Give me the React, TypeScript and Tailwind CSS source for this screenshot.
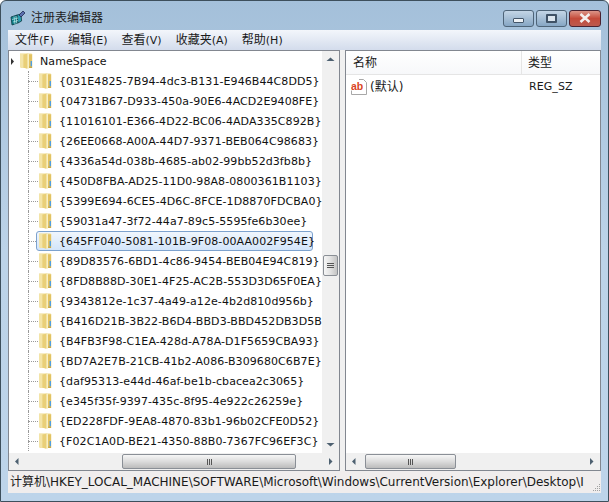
const FONT = '"DejaVu Sans","Noto Sans CJK SC",sans-serif';

const KEYS = [
  "{031E4825-7B94-4dc3-B131-E946B44C8DD5}",
  "{04731B67-D933-450a-90E6-4ACD2E9408FE}",
  "{11016101-E366-4D22-BC06-4ADA335C892B}",
  "{26EE0668-A00A-44D7-9371-BEB064C98683}",
  "{4336a54d-038b-4685-ab02-99bb52d3fb8b}",
  "{450D8FBA-AD25-11D0-98A8-0800361B1103}",
  "{5399E694-6CE5-4D6C-8FCE-1D8870FDCBA0}",
  "{59031a47-3f72-44a7-89c5-5595fe6b30ee}",
  "{645FF040-5081-101B-9F08-00AA002F954E}",
  "{89D83576-6BD1-4c86-9454-BEB04E94C819}",
  "{8FD8B88D-30E1-4F25-AC2B-553D3D65F0EA}",
  "{9343812e-1c37-4a49-a12e-4b2d810d956b}",
  "{B416D21B-3B22-B6D4-BBD3-BBD452DB3D5B}",
  "{B4FB3F98-C1EA-428d-A78A-D1F5659CBA93}",
  "{BD7A2E7B-21CB-41b2-A086-B309680C6B7E}",
  "{daf95313-e44d-46af-be1b-cbacea2c3065}",
  "{e345f35f-9397-435c-8f95-4e922c26259e}",
  "{ED228FDF-9EA8-4870-83b1-96b02CFE0D52}",
  "{F02C1A0D-BE21-4350-88B0-7367FC96EF3C}",
];

function Folder() {
  return (
    <svg width="16" height="18" viewBox="0 0 16 18" className="shrink-0 relative">
      <path d="M1 1.5h11.5l.8 1v13.5H2.5L1 15z" fill="#eed98c" />
      <path d="M1 2h3.5v14H2.5L1 15z" fill="#f3e4a8" />
      <path d="M4.5 3L8.5 1.5V17l-4-1.5z" fill="#e9cf78" />
      <path d="M8.5 2h1.5v14.5l-1.5.5z" fill="#f8efc4" />
      <path d="M10 2.5h3v13.5h-3z" fill="#e2c262" />
      <path d="M11.6 9h1.4v5.5h-1.4z" fill="#4f9ee0" />
      <path d="M10.2 14.5h2.8v1.5h-2.8z" fill="#c9a94a" />
    </svg>
  );
}

function Arrow({ dir }: { dir: "l" | "r" | "u" | "d" }) {
  const p = { l: "M5.5 1v7L2 4.5z", r: "M3 1v7l3.5-3.5z", u: "M4.5 2.5l4 3.5h-8z", d: "M.5 3h8l-4 3.5z" }[dir];
  return (
    <svg width="9" height="9" viewBox="0 0 9 9">
      <path d={p} fill="#4d6070" />
    </svg>
  );
}

function HThumb({ className }: { className: string }) {
  return (
    <div className={`${className} h-[15px] border border-[#8a8f96] rounded-[2px] bg-gradient-to-b from-[#f6f6f6] via-[#dcdcdc] to-[#bcbcbc] flex items-center justify-center gap-[1px]`}>
      <span className="w-[1px] h-[6px] bg-[#555]" />
      <span className="w-[1px] h-[6px] bg-[#555]" />
      <span className="w-[1px] h-[6px] bg-[#555]" />
    </div>
  );
}

function HBar({ thumb, lead }: { thumb: string; lead: string }) {
  return (
    <div className="h-[17px] shrink-0 bg-[#f0f0f0] flex items-center">
      <div className="w-[17px] flex justify-center"><Arrow dir="l" /></div>
      <div className={lead} />
      <HThumb className={thumb} />
      <div className="flex-1" />
      <div className="w-[17px] flex justify-center"><Arrow dir="r" /></div>
    </div>
  );
}

function CaptionButton({ kind }: { kind: "min" | "max" | "close" }) {
  if (kind === "close") {
    return (
      <div className="w-[32px] h-[17px] border border-[#4a2230] rounded-[3px] bg-gradient-to-b from-[#dc9488] via-[#c44a3a] to-[#bb5a4e] flex items-center justify-center">
        <svg width="14" height="10" viewBox="0 0 14 10"><path d="M2.5 1l9 8M11.5 1l-9 8" stroke="#f4eeee" strokeWidth="2.6" /></svg>
      </div>
    );
  }
  return (
    <div className="w-[31px] h-[17px] border border-[#4e6478] rounded-[3px] bg-gradient-to-b from-[#c3d5e6] via-[#a5bed5] to-[#86a6c4] flex items-center justify-center">
      {kind === "min" ? (
        <div className="w-[11px] h-[5px] mt-[5px] bg-[#eef2f6] border border-[#44566a] rounded-[1px]" />
      ) : (
        <div className="w-[11px] h-[9px] border-[2px] border-[#3f5266] bg-[#dbe5ee] rounded-[1px]" />
      )}
    </div>
  );
}

function AppIcon() {
  return (
    <svg width="16" height="16" viewBox="0 0 16 16" className="shrink-0">
      <path d="M1 7l6-2 1 8-6 2z" fill="#11808a" stroke="#0b3b44" strokeWidth="0.8" />
      <path d="M7 5l4-1 .6 7-3.6 2z" fill="#2c9fb0" stroke="#0b3b44" strokeWidth="0.8" />
      <path d="M2 9.5l6-1.5M3 12l5-1.5M4 6.5l1 8M6 6l.8 7.5" stroke="#bfe9ea" strokeWidth="0.7" />
      <path d="M9 5l4-4 2 2-4 4z" fill="#5b6fae" stroke="#1f2a52" strokeWidth="0.8" />
    </svg>
  );
}

function MenuItem({ cjk, hot }: { cjk: string; hot: string }) {
  return (
    <span className="whitespace-nowrap">
      {cjk}
      <span className="text-[11px]">({hot})</span>
    </span>
  );
}

export default function App() {
  return (
    <div
      className="w-[609px] h-[502px] overflow-hidden flex flex-col border border-[#3d4f5c] rounded-t-[6px] bg-gradient-to-b from-[#a4c0da] via-[#bcd3e8] to-[#bdd4ea] text-[12px] text-[#1a1a1a]"
      style={{ fontFamily: FONT }}
    >
      <div className="h-[29px] shrink-0 flex items-center pt-[5px] pl-[9px] pr-[7px] gap-[5px]">
        <AppIcon />
        <span className="flex-1 text-[#222]">注册表编辑器</span>
        <div className="flex gap-[2px]">
          <CaptionButton kind="min" />
          <CaptionButton kind="max" />
          <CaptionButton kind="close" />
        </div>
      </div>
      <div className="flex-1 mx-[7px] mb-[8px] flex flex-col min-h-0">
        <div className="h-[20px] shrink-0 bg-gradient-to-b from-[#f3f6fb] to-[#d3dcec] flex items-center pl-[7px] gap-[14px]">
          <MenuItem cjk="文件" hot="F" />
          <MenuItem cjk="编辑" hot="E" />
          <MenuItem cjk="查看" hot="V" />
          <MenuItem cjk="收藏夹" hot="A" />
          <MenuItem cjk="帮助" hot="H" />
        </div>
        <div className="flex-1 flex gap-[5px] min-h-0 bg-[#f0f0f0]">
          <div className="w-[332px] border border-[#828790] flex flex-col bg-white min-h-0">
            <div className="flex-1 flex min-h-0">
              <div className="flex-1 min-w-0 overflow-hidden text-[11px] tracking-[0.08px] text-[#111]">
                <div className="h-[20px] flex items-center pl-[1px] whitespace-nowrap">
                  <svg width="5" height="7" viewBox="0 0 5 7" className="mr-[4px] shrink-0"><path d="M1 0v7l3-3.5z" fill="#333" /></svg>
                  <Folder />
                  <span className="ml-[5px] shrink-0 pt-[2px]">NameSpace</span>
                </div>
                {KEYS.map((k, i) => (
                  <div key={k} className="h-[20px] flex items-center whitespace-nowrap relative">
                    <div className="absolute left-[19px] top-0 bottom-0 border-l border-dotted border-[#999]" />
                    {i === 8 && (
                      <div className="absolute left-[27px] top-[0px] h-[20px] w-[277px] border border-[#7da2ce] rounded-[3px] bg-gradient-to-b from-[#f0f6fd] to-[#d3e5fa]" />
                    )}
                    <div className="w-[10px] ml-[19px] shrink-0 border-t border-dotted border-[#999]" />
                    <Folder />
                    <span className="ml-[5px] shrink-0 relative pt-[2px]">{k}</span>
                  </div>
                ))}
              </div>
              <div className="w-[17px] shrink-0 bg-[#f0f0f0] flex flex-col items-center">
                <div className="h-[17px] flex items-center"><Arrow dir="u" /></div>
                <div className="h-[187px]" />
                <div className="w-[15px] h-[21px] border border-[#8a8f96] rounded-[2px] bg-gradient-to-r from-[#f6f6f6] via-[#e2e2e2] to-[#c4c4c4] flex flex-col items-center justify-center gap-[1px]">
                  <span className="w-[7px] h-[1px] bg-[#555]" />
                  <span className="w-[7px] h-[1px] bg-[#555]" />
                  <span className="w-[7px] h-[1px] bg-[#555]" />
                </div>
                <div className="flex-1" />
                <div className="h-[17px] flex items-center"><Arrow dir="d" /></div>
              </div>
            </div>
            <HBar lead="w-[96px]" thumb="w-[174px]" />
          </div>
          <div className="flex-1 border border-[#828790] flex flex-col bg-white min-w-0">
            <div className="h-[24px] shrink-0 flex items-center bg-gradient-to-b from-white to-[#f7f8fa] border-b border-[#e5e5e5]">
              <span className="w-[176px] pl-[7px] border-r border-[#e5e5e5] h-full flex items-center">名称</span>
              <span className="pl-[6px]">类型</span>
            </div>
            <div className="h-[24px] shrink-0 flex items-center pl-[5px]">
              <svg width="16" height="16" viewBox="0 0 16 16" className="shrink-0">
                <path d="M.5 11v4.5h15V3.5l-3-3H8" fill="none" stroke="#a8a8a8" />
                <rect x="0" y="2" width="13" height="9.5" fill="#fff" />
                <text x="0" y="10.5" fontSize="10.5" fontWeight="700" fill="#d9441f" fontFamily="Liberation Sans">ab</text>
              </svg>
              <span className="ml-[3px] w-[159px] shrink-0">(默认)</span>
              <span className="text-[11px] tracking-[0.08px]">REG_SZ</span>
            </div>
            <div className="flex-1" />
            <HBar lead="w-[2px]" thumb="w-[91px]" />
          </div>
        </div>
        <div className="h-[22px] shrink-0 bg-[#f0eded] flex items-center pl-[2px] whitespace-nowrap overflow-hidden relative">
          计算机\HKEY_LOCAL_MACHINE\SOFTWARE\Microsoft\Windows\CurrentVersion\Explorer\Desktop\I
          <svg width="10" height="10" viewBox="0 0 10 10" className="absolute right-0 bottom-[1px]">
            <path d="M8 2h1v1H8zM6 4h1v1H6zM8 4h1v1H8zM4 6h1v1H4zM6 6h1v1H6zM8 6h1v1H8zM2 8h1v1H2zM4 8h1v1H4zM6 8h1v1H6zM8 8h1v1H8z" fill="#a0a0a0" />
          </svg>
        </div>
      </div>
    </div>
  );
}
